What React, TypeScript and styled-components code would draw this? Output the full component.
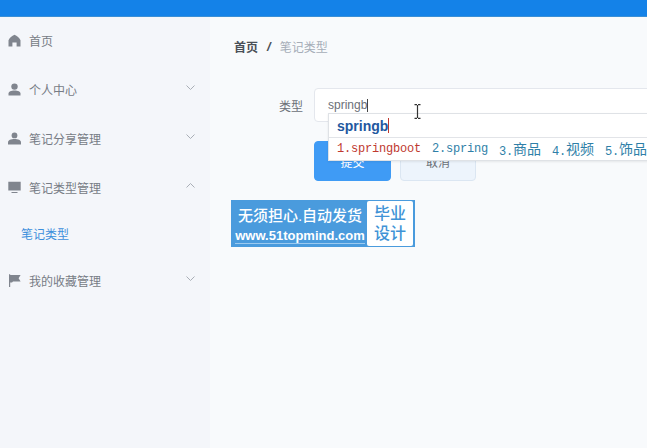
import React from 'react';
import styled, { createGlobalStyle } from 'styled-components';

const Global = createGlobalStyle`
  html, body { margin: 0; padding: 0; }
  body {
    width: 647px;
    height: 448px;
    overflow: hidden;
    font-family: "Liberation Sans", "Noto Sans CJK SC", sans-serif;
    background: #f8fafc;
  }
`;

const Page = styled.div`
  width: 647px;
  height: 448px;
  display: flex;
  flex-direction: column;
  overflow: hidden;
`;

const TopBar = styled.div`
  height: 16px;
  flex: none;
  background: #1482e8;
  border-bottom: 1px solid #3a8fd6;
`;

const Body = styled.div`
  flex: 1;
  display: flex;
  min-height: 0;
`;

const Sidebar = styled.div`
  width: 210px;
  flex: none;
  background: #f4f6fa;
`;

const MenuRow = styled.div<{ $height?: number }>`
  height: ${(p) => p.$height ?? 49}px;
  display: flex;
  align-items: center;
  padding: 0 15px 0 8px;
  color: #777c85;
  font-size: 12px;
`;

const MenuIcon = styled.svg`
  width: 13px;
  height: 13px;
  flex: none;
  margin-right: 8px;
  fill: #80858e;
`;

const MenuLabel = styled.span`
  flex: 1;
`;

const Chevron = styled.svg<{ $up?: boolean }>`
  width: 9px;
  height: 5px;
  flex: none;
  margin-top: -4px;
  fill: none;
  stroke: #a9aeb6;
  stroke-width: 1;
  transform: ${(p) => (p.$up ? 'rotate(180deg)' : 'none')};
`;

const SubRow = styled.div`
  height: 43px;
  display: flex;
  align-items: center;
  padding-left: 21px;
  color: #3d8fdc;
  font-size: 12px;
`;

const Main = styled.div`
  flex: 1;
  min-width: 0;
  background: #f8fafc;
  padding: 21px 0 0 24px;
`;

const Crumbs = styled.div`
  display: flex;
  align-items: center;
  height: 16px;
  font-size: 12px;
`;

const CrumbHome = styled.span`
  font-weight: 700;
  color: #4a4f57;
`;

const CrumbSep = styled.span`
  font-weight: 700;
  font-style: italic;
  font-size: 13px;
  margin: 0 9px;
  color: #4a4f57;
`;

const CrumbPage = styled.span`
  color: #a6adb8;
`;

const FormRow = styled.div`
  display: flex;
  align-items: center;
  margin-top: 34px;
`;

const FieldLabel = styled.label`
  width: 80px;
  flex: none;
  text-align: right;
  padding-right: 11px;
  box-sizing: border-box;
  font-size: 12px;
  color: #6b7078;
`;

const InputBox = styled.div`
  position: relative;
  width: 340px;
  height: 34px;
  flex: none;
  box-sizing: border-box;
  background: #fff;
  border: 1px solid #e4e7ed;
  border-radius: 4px;
  padding-left: 13px;
  display: flex;
  align-items: center;
  font-size: 12px;
  color: #6c7078;
`;

const Caret = styled.span<{ $color: string; $height: number }>`
  display: inline-block;
  width: 1px;
  height: ${(p) => p.$height}px;
  background: ${(p) => p.$color};
  vertical-align: middle;
`;

const Buttons = styled.div`
  display: flex;
  gap: 9px;
  margin: 19px 0 0 80px;
`;

const Button = styled.div<{ $primary?: boolean }>`
  width: ${(p) => (p.$primary ? 77 : 76)}px;
  height: 40px;
  box-sizing: border-box;
  border-radius: 4px;
  display: flex;
  align-items: center;
  justify-content: center;
  font-size: 12px;
  background: ${(p) => (p.$primary ? '#3f9bf5' : '#edf4fc')};
  color: ${(p) => (p.$primary ? '#fff' : '#6b7078')};
  border: 1px solid ${(p) => (p.$primary ? '#3f9bf5' : '#dbe6f2')};
`;

const Banner = styled.div`
  width: 184px;
  height: 47px;
  box-sizing: border-box;
  margin: 19px 0 0 -3px;
  background: #4a9bdd;
  padding: 1px 2px;
  display: flex;
  align-items: stretch;
`;

const BannerText = styled.div`
  flex: 1;
  display: flex;
  flex-direction: column;
  align-items: center;
  justify-content: center;
  gap: 3px;
  padding-top: 3px;
  color: #fff;
`;

const BannerLine = styled.div`
  font-size: 15px;
  line-height: 18px;
  font-weight: 500;
  white-space: nowrap;
`;

const BannerUrl = styled.div`
  font-size: 13px;
  line-height: 15px;
  font-weight: 700;
  white-space: nowrap;
  border-bottom: 1px solid #9ccaf0;
`;

const BannerTag = styled.div`
  width: 46px;
  flex: none;
  background: #fff;
  color: #3f93d6;
  border-radius: 2px;
  font-size: 16px;
  font-weight: 500;
  line-height: 20px;
  text-align: center;
  display: flex;
  align-items: center;
  justify-content: center;
`;

/* IME candidate popup sits over the input and the buttons */
const Ime = styled.div`
  position: absolute;
  left: 13px;
  top: 24px;
  width: 340px;
  height: 48px;
  background: #fff;
  border: 1px solid #dfe2e6;
  box-sizing: border-box;
  box-shadow: 0 1px 2px rgba(0, 0, 0, 0.08);
  z-index: 2;
`;

const ImeInput = styled.div`
  height: 23px;
  padding-left: 8px;
  border-bottom: 1px solid #e2e4e8;
  display: flex;
  align-items: center;
  font-size: 14px;
  font-weight: 700;
  color: #23589f;
`;

const ImeList = styled.div`
  height: 21px;
  display: flex;
  align-items: center;
  padding-left: 8px;
  gap: 11px;
  white-space: nowrap;
  font-family: "Liberation Mono", "Noto Sans CJK SC", monospace;
  font-size: 12px;
`;

const Candidate = styled.span<{ $active?: boolean }>`
  color: ${(p) => (p.$active ? '#c0392f' : '#2f7fa8')};
  letter-spacing: -0.2px;
`;

const CandidateWord = styled.span`
  font-size: 14px;
  letter-spacing: 0;
  vertical-align: 1px;
`;

const TextCursor = styled.svg`
  position: absolute;
  left: 99px;
  top: 15px;
  width: 7px;
  height: 15px;
  z-index: 3;
`;

const items = [
  { label: '个人中心', icon: 'person', height: 50 },
  { label: '笔记分享管理', icon: 'people', height: 49 },
];

function Icon({ kind }: { kind: string }) {
  if (kind === 'home') {
    return (
      <MenuIcon viewBox="0 0 13 13">
        <path d="M6.5 .8 C9 2 11.5 3.8 12.5 6.2 V12.5 H8.6 V8.4 H4.4 V12.5 H.5 V6.2 C1.5 3.8 4 2 6.5 .8 Z" />
      </MenuIcon>
    );
  }
  if (kind === 'screen') {
    return (
      <MenuIcon viewBox="0 0 13 13">
        <path d="M.3 .8 H12.7 V9.6 H.3 Z M3.5 11 H9.5 V12 H3.5 Z" />
      </MenuIcon>
    );
  }
  if (kind === 'flag') {
    return (
      <MenuIcon viewBox="0 0 13 13">
        <path d="M1 .3 H2.2 V13 H1 Z M2.2 1 H12.6 L10.6 4.2 L12.6 7.6 H5 L4 8.6 H2.2 Z" />
      </MenuIcon>
    );
  }
  if (kind === 'people') {
    return (
      <MenuIcon viewBox="0 0 13 13">
        <circle cx="6.5" cy="3.4" r="2.9" />
        <path d="M0 12.6 V10.4 C0 8.2 3 7 6.5 7 C10 7 13 8.2 13 10.4 V12.6 Z" />
      </MenuIcon>
    );
  }
  return (
    <MenuIcon viewBox="0 0 13 13">
      <circle cx="6.5" cy="3.6" r="3.2" />
      <path d="M.5 12.5 V10.5 C.5 8.5 3 7.4 6.5 7.4 C10 7.4 12.5 8.5 12.5 10.5 V12.5 Z" />
    </MenuIcon>
  );
}

function Arrow({ up }: { up?: boolean }) {
  return (
    <Chevron $up={up} viewBox="0 0 9 5">
      <path d="M.5 .5 L4.5 4.5 L8.5 .5" />
    </Chevron>
  );
}

export default function App() {
  return (
    <Page>
      <Global />
      <TopBar />
      <Body>
        <Sidebar>
          <MenuRow $height={47}>
            <Icon kind="home" />
            <MenuLabel>首页</MenuLabel>
          </MenuRow>
          {items.map((item) => (
            <MenuRow key={item.label} $height={item.height}>
              <Icon kind={item.icon} />
              <MenuLabel>{item.label}</MenuLabel>
              <Arrow />
            </MenuRow>
          ))}
          <MenuRow>
            <Icon kind="screen" />
            <MenuLabel>笔记类型管理</MenuLabel>
            <Arrow up />
          </MenuRow>
          <SubRow>笔记类型</SubRow>
          <MenuRow $height={51}>
            <Icon kind="flag" />
            <MenuLabel>我的收藏管理</MenuLabel>
            <Arrow />
          </MenuRow>
        </Sidebar>
        <Main>
          <Crumbs>
            <CrumbHome>首页</CrumbHome>
            <CrumbSep>/</CrumbSep>
            <CrumbPage>笔记类型</CrumbPage>
          </Crumbs>
          <FormRow>
            <FieldLabel>类型</FieldLabel>
            <InputBox>
              springb
              <Caret $color="#444" $height={13} />
              <Ime>
                <ImeInput>
                  springb
                  <Caret $color="#c0392f" $height={15} />
                </ImeInput>
                <ImeList>
                  <Candidate $active>1.springboot</Candidate>
                  <Candidate>2.spring</Candidate>
                  <Candidate>3.<CandidateWord>商品</CandidateWord></Candidate>
                  <Candidate>4.<CandidateWord>视频</CandidateWord></Candidate>
                  <Candidate>5.<CandidateWord>饰品</CandidateWord></Candidate>
                </ImeList>
              </Ime>
              <TextCursor viewBox="0 0 7 15">
                <path d="M.5 .7 H3 M4 .7 H6.5 M3.5 1 V14 M.5 14.3 H3 M4 14.3 H6.5" stroke="#333" strokeWidth="1.2" fill="none" />
              </TextCursor>
            </InputBox>
          </FormRow>
          <Buttons>
            <Button $primary>提交</Button>
            <Button>取消</Button>
          </Buttons>
          <Banner>
            <BannerText>
              <BannerLine>无须担心.自动发货</BannerLine>
              <BannerUrl>www.51topmind.com</BannerUrl>
            </BannerText>
            <BannerTag>
              毕业
              <br />
              设计
            </BannerTag>
          </Banner>
        </Main>
      </Body>
    </Page>
  );
}
